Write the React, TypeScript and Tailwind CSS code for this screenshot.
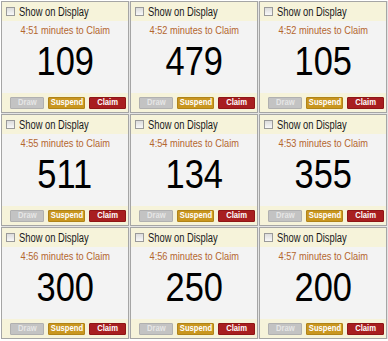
const cells = [
  { time: "4:51", num: "109" },
  { time: "4:52", num: "479" },
  { time: "4:52", num: "105" },
  { time: "4:55", num: "511" },
  { time: "4:54", num: "134" },
  { time: "4:53", num: "355" },
  { time: "4:56", num: "300" },
  { time: "4:56", num: "250" },
  { time: "4:57", num: "200" },
]

const Cell = ({ time, num }: { time: string; num: string }) => {
  return (
    <div className="flex flex-col border border-[#a5a5a5] bg-[#f3f3f3]">
      <div className="flex h-[19px] items-center bg-[#f6f3da] pl-[4px]">
        <span className="h-[9px] w-[9px] border border-[#9a9a9a] bg-gradient-to-b from-[#dcdcdc] to-[#f8f8f8]" />
        <span className="ml-[4px] origin-left scale-x-[0.78] whitespace-nowrap text-[12px] leading-none text-[#1a1a1a]">
          Show on Display
        </span>
      </div>
      <div className="flex flex-1 flex-col items-center">
        <div className="mt-[3px] scale-x-[0.84] whitespace-nowrap text-[11px] leading-[13px] text-[#b3662f]">
          {time} minutes to Claim
        </div>
        <div className="mt-[3px] scale-x-[0.84] text-[41px] leading-[42px] text-black">{num}</div>
      </div>
      <div className="flex h-[19px] items-center justify-end gap-[4px] bg-[#f6f3da] pr-[2px]">
        <button className="flex h-[12px] w-[34px] items-center justify-center rounded-[1px] border border-[#b0b0b0] bg-[#c3c3c3] text-[8.5px] font-bold text-[#e6e6e6]">
          <span className="scale-x-[0.9]">Draw</span>
        </button>
        <button className="flex h-[12px] w-[37px] items-center justify-center rounded-[1px] border border-[#b08318] bg-[#c9961f] text-[8.5px] font-bold text-white">
          <span className="scale-x-[0.9]">Suspend</span>
        </button>
        <button className="flex h-[12px] w-[37px] items-center justify-center rounded-[1px] border border-[#8e1616] bg-[#a81e20] text-[8.5px] font-bold text-white">
          <span className="scale-x-[0.9]">Claim</span>
        </button>
      </div>
    </div>
  )
}

export default function App() {
  return (
    <div
      className="h-[341px] w-[388px] bg-white pl-px pt-px"
      style={{ fontFamily: '"Liberation Sans", Arial, sans-serif' }}
    >
      <div className="grid grid-cols-[repeat(3,128px)] grid-rows-[repeat(3,112px)] gap-px bg-[#e4e4e4]">
        {cells.map((c, i) => (
          <Cell key={i} time={c.time} num={c.num} />
        ))}
      </div>
    </div>
  )
}
